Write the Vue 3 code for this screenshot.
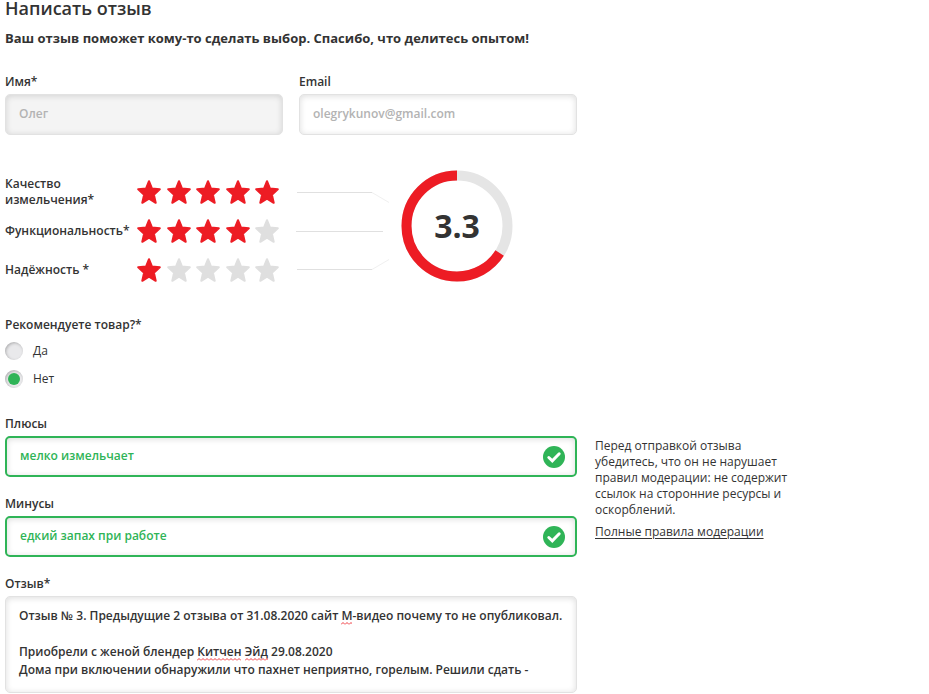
<script setup>
import { ref, computed, onMounted } from 'vue'

const name = ref('Олег')
const email = ref('olegrykunov@gmail.com')
const recommend = ref('no')
const pros = ref('мелко измельчает')
const cons = ref('едкий запах при работе')

const ratings = ref([
  { id: 'quality', label: 'Качество измельчения*', value: 5 },
  { id: 'functions', label: 'Функциональность*', value: 4 },
  { id: 'reliability', label: 'Надёжность *', value: 1 },
])

const review = ref(
  [
    'Отзыв № 3. Предыдущие 2 отзыва от 31.08.2020 сайт М-видео почему то не опубликовал.',
    '',
    'Приобрели с женой блендер Китчен Эйд 29.08.2020',
    'Дома при включении обнаружили что пахнет неприятно, горелым. Решили сдать -',
  ].join('\n'),
)

const LINE_HEIGHT = 18

// слова, которых нет в словаре
const unknownWords = /М(?=-видео)|Китчен|Эйд/g

const reviewField = ref(null)
const marks = ref([])

// считаем, где под текстом должны быть волнистые линии
function updateMarks() {
  const ctx = document.createElement('canvas').getContext('2d')
  const style = getComputedStyle(reviewField.value)
  ctx.font = `${style.fontWeight} ${style.fontSize} ${style.fontFamily}`
  const found = []
  review.value.split('\n').forEach((line, row) => {
    for (const match of line.matchAll(unknownWords)) {
      found.push({
        left: Math.round(ctx.measureText(line.slice(0, match.index)).width),
        top: row * LINE_HEIGHT + 15,
        width: Math.round(ctx.measureText(match[0]).width),
      })
    }
  })
  marks.value = found
}

const average = computed(() => {
  const sum = ratings.value.reduce((acc, r) => acc + r.value, 0)
  return (sum / ratings.value.length).toFixed(1)
})

const percent = computed(() => Math.round((average.value / 5) * 100))

onMounted(() => {
  updateMarks()
})
</script>

<template>
  <form class="review-form" @submit.prevent>
    <div class="main-part">
      <h1>Написать отзыв</h1>
      <p class="subtitle">Ваш отзыв поможет кому-то сделать выбор. Спасибо, что делитесь опытом!</p>

      <div class="contacts">
        <div class="field">
          <label for="name">Имя*</label>
          <input id="name" v-model="name" type="text" class="text-input muted" disabled />
        </div>
        <div class="field">
          <label for="email">Email</label>
          <input id="email" v-model="email" type="email" class="text-input pale" />
        </div>
      </div>

      <div class="rating">
        <div class="rating-rows">
          <div
            v-for="item in ratings"
            :key="item.id"
            class="rating-row"
            role="radiogroup"
            :aria-labelledby="item.id"
          >
            <span :id="item.id" class="rating-label">{{ item.label }}</span>
            <div class="stars">
              <label v-for="n in 5" :key="n" class="star" :class="{ active: n <= item.value }">
                <input
                  v-model="item.value"
                  type="radio"
                  :name="item.id"
                  :value="n"
                  :aria-label="String(n)"
                />
                <svg viewBox="0 0 24 24" aria-hidden="true">
                  <path
                    d="M12 1.200L15 8.600 22.800 9.300 16.900 14.700 18.700 22.800 12 18.700 5.300 22.800 7.100 14.700 1.200 9.300 9 8.600z"
                  />
                </svg>
              </label>
            </div>
          </div>
        </div>

        <svg class="connectors" viewBox="0 0 94 117" aria-hidden="true">
          <path d="M1 19.500H76M0 58.500H87M1 96.500H76" stroke="#e0e0e0" />
          <path d="M76 19.500L93 29.500M76 96.500L93 86.500" stroke="#f0f0f0" />
        </svg>

        <div class="score">
          <svg viewBox="0 0 112 112" aria-hidden="true">
            <circle cx="56" cy="56" r="50.500" class="ring" />
            <circle
              cx="56"
              cy="56"
              r="50.500"
              class="ring ring-value"
              pathLength="100"
              :stroke-dasharray="`${percent} ${100 - percent}`"
              :stroke-dashoffset="percent - 100"
              transform="rotate(-90 56 56)"
            />
          </svg>
          <span class="score-value">{{ average }}</span>
        </div>
      </div>

      <fieldset class="recommend">
        <legend>Рекомендуете товар?*</legend>
        <label class="radio">
          <input v-model="recommend" type="radio" name="recommend" value="yes" />
          Да
        </label>
        <label class="radio">
          <input v-model="recommend" type="radio" name="recommend" value="no" />
          Нет
        </label>
      </fieldset>
    </div>

    <div class="texts">
      <div class="field">
        <label for="pros">Плюсы</label>
        <div class="valid-box">
          <input id="pros" v-model="pros" type="text" />
          <svg class="check" viewBox="0 0 22 22" aria-hidden="true">
            <circle cx="11" cy="11" r="11" />
            <path d="M5.800 11.500l3.500 3.300 6.900-7" />
          </svg>
        </div>
      </div>
      <div class="field">
        <label for="cons">Минусы</label>
        <div class="valid-box">
          <input id="cons" v-model="cons" type="text" />
          <svg class="check" viewBox="0 0 22 22" aria-hidden="true">
            <circle cx="11" cy="11" r="11" />
            <path d="M5.800 11.500l3.500 3.300 6.900-7" />
          </svg>
        </div>
      </div>
      <div class="field">
        <label for="review">Отзыв*</label>
        <div class="review-box">
          <textarea
            id="review"
            ref="reviewField"
            v-model="review"
            rows="4"
            spellcheck="false"
            @input="updateMarks"
          ></textarea>
          <svg class="spelling" aria-hidden="true">
            <defs>
              <pattern id="wave" width="4" height="3" patternUnits="userSpaceOnUse">
                <path d="M0 2.500L2 0.500 4 2.500" fill="none" stroke="#f0393f" />
              </pattern>
            </defs>
            <g v-for="(mark, i) in marks" :key="i" :transform="`translate(${mark.left} ${mark.top})`">
              <rect :width="mark.width" height="3" fill="url(#wave)" />
            </g>
          </svg>
        </div>
      </div>
    </div>

    <aside class="rules">
      <p>
        Перед отправкой отзыва убедитесь, что он не нарушает правил модерации: не содержит ссылок на
        сторонние ресурсы и оскорблений.
      </p>
      <a href="#rules">Полные правила модерации</a>
    </aside>
  </form>
</template>

<style>
body {
  background: #fff;
}
</style>

<style scoped>
* {
  box-sizing: border-box;
}

.review-form {
  display: grid;
  grid-template-columns: minmax(0, 1fr) 329px;
  column-gap: 18px;
  row-gap: 27px;
  padding: 0 5px;
  font-family: 'Open Sans', 'Noto Sans', sans-serif;
  font-size: 12px;
  line-height: 16px;
  color: #333;
}

.main-part,
.texts {
  grid-column: 1;
}

h1 {
  margin: 0;
  font-size: 18px;
  line-height: 16px;
  font-weight: 600;
}

.subtitle {
  margin: 14px 0 28px;
  font-size: 13px;
  font-weight: 700;
}

.field {
  display: flex;
  flex-direction: column;
  gap: 4px;
}

.field label,
.rating-label,
legend {
  font-weight: 600;
}

.contacts {
  display: grid;
  grid-template-columns: 1fr 1fr;
  gap: 16px;
}

.text-input,
.valid-box,
textarea {
  width: 100%;
  border: 1px solid #e2e2e2;
  border-radius: 5px;
  background: #fff;
  box-shadow: inset 0 1px 6px rgba(0, 0, 0, 0.14);
}

input[type='text'],
input[type='email'],
textarea {
  font-family: inherit;
  font-size: 12px;
  font-weight: 600;
  color: #333;
  outline: none;
}

input[type='text'].text-input,
input[type='email'].text-input {
  height: 41px;
  padding: 0 13px 2px;
  color: #b3b3b3;
}

.text-input.muted {
  background: #f4f4f4;
}

/* оценки */
.rating {
  display: flex;
  align-items: flex-start;
  margin-top: 35px;
}

.rating-rows {
  margin-top: 2px;
}

.rating-row {
  display: flex;
  align-items: center;
  height: 39px;
}

.rating-label {
  width: 132px;
}

.rating-row:first-child .rating-label {
  padding-right: 24px;
}

.stars {
  display: flex;
  justify-content: space-between;
  width: 142px;
}

.star {
  display: grid;
  width: 24px;
  height: 24px;
  cursor: pointer;
}

.star input,
.star svg {
  grid-area: 1 / 1;
  width: 24px;
  height: 24px;
  margin: 0;
}

.star input {
  appearance: none;
}

.star path {
  fill: #dfdfdf;
  stroke: #dfdfdf;
  stroke-width: 2;
  stroke-linejoin: round;
}

.star.active path {
  fill: #ed1c24;
  stroke: #ed1c24;
}

.connectors {
  width: 94px;
  height: 117px;
  margin-top: 3px;
  margin-left: 17px;
  fill: none;
}

.score {
  display: grid;
  place-items: center;
  margin-left: 11px;
}

.score svg,
.score-value {
  grid-area: 1 / 1;
}

.score svg {
  width: 112px;
  height: 112px;
}

.ring {
  fill: none;
  stroke: #e5e5e5;
  stroke-width: 10;
}

.ring-value {
  stroke: #ed1c24;
}

.score-value {
  font-size: 32px;
  line-height: 32px;
  font-weight: 700;
}

.recommend {
  display: flex;
  flex-direction: column;
  gap: 8px;
  margin: 27px 0 0;
  padding: 0;
  border: none;
}

legend {
  margin-bottom: 8px;
  padding: 0;
}

.radio {
  display: flex;
  align-items: center;
  gap: 10px;
  height: 20px;
}

.radio input {
  appearance: none;
  display: grid;
  place-items: center;
  width: 18px;
  height: 18px;
  margin: 0;
  border-radius: 50%;
  background: #e9e9eb;
  box-shadow: inset 1px 1px 3px rgba(0, 0, 0, 0.25);
}

.radio input:checked::before {
  content: '';
  width: 12px;
  height: 12px;
  border-radius: 50%;
  background: #2fb457;
}

/* тексты отзыва */
.texts {
  display: flex;
  flex-direction: column;
  gap: 19px;
}

.valid-box {
  display: flex;
  align-items: center;
  height: 41px;
  padding: 0 10px 0 13px;
  border: 2px solid #2fb457;
}

.valid-box input[type='text'] {
  flex: 1;
  min-width: 0;
  padding: 0 0 2px;
  border: none;
  background: transparent;
  color: #2fb457;
}

.check {
  width: 22px;
  height: 22px;
  fill: #2fb457;
}

.check path {
  fill: none;
  stroke: #fff;
  stroke-width: 3;
  stroke-linecap: round;
}

.review-box {
  position: relative;
}

textarea {
  display: block;
  padding: 10px 4px 13px 13px;
  line-height: 18px;
  resize: none;
  overflow: hidden;
}

/* лежит поверх поля, начало координат там же, где начало текста */
.spelling {
  position: absolute;
  top: 11px;
  left: 14px;
  width: calc(100% - 14px);
  height: calc(100% - 11px);
  pointer-events: none;
}

.rules {
  grid-column: 2;
  padding-top: 22px;
}

.rules p {
  max-width: 200px;
  margin: 0 0 6px;
}

.rules a {
  color: #333;
  text-underline-offset: 2px;
}
</style>
